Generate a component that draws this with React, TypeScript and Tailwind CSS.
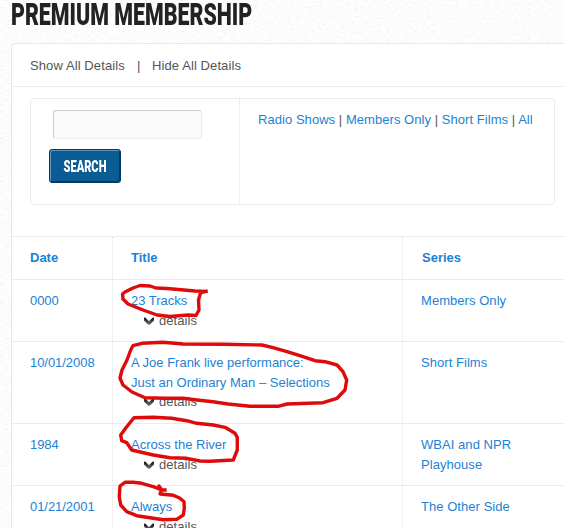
type Row = {
  date: string;
  title: string[];
  series: string[];
  height: string;
};

const rows: Row[] = [
  { date: "0000", title: ["23 Tracks"], series: ["Members Only"], height: "h-[62px]" },
  {
    date: "10/01/2008",
    title: ["A Joe Frank live performance:", "Just an Ordinary Man – Selections"],
    series: ["Short Films"],
    height: "h-[82px]",
  },
  { date: "1984", title: ["Across the River"], series: ["WBAI and NPR", "Playhouse"], height: "h-[62px]" },
  { date: "01/21/2001", title: ["Always"], series: ["The Other Side"], height: "h-[62px]" },
];

const filters = ["Radio Shows", "Members Only", "Short Films", "All"];

/**
 * Light speckled paper behind the page.
 */
function PaperTexture() {
  return (
    <svg className="absolute inset-0 h-full w-full" aria-hidden="true">
      <filter id="paper" x="0" y="0" width="100%" height="100%">
        <feTurbulence type="fractalNoise" baseFrequency="0.22 0.55" numOctaves="3" seed="8" />
        <feColorMatrix values="0 0 0 0 0.6  0 0 0 0 0.6  0 0 0 0 0.6  1.8 0 0 0 -1" />
      </filter>
      <rect width="100%" height="100%" filter="url(#paper)" opacity="0.42" />
    </svg>
  );
}

function Chevron() {
  return (
    <svg width="12" height="9" viewBox="0 0 12 9" className="mt-[6px] shrink-0" aria-hidden="true">
      <defs>
        <linearGradient id="chevron" x1="0" y1="0" x2="0" y2="1">
          <stop offset="0" stopColor="#111" />
          <stop offset="1" stopColor="#777" />
        </linearGradient>
      </defs>
      <path d="M1 0.5 L2.6 0.8 L6 4.2 L9.4 0.8 L11 0.5 L11 3.6 L6.8 7.8 L5.2 7.8 L1 3.6 Z" fill="url(#chevron)" />
    </svg>
  );
}

function TableRow({ row }: { row: Row }) {
  return (
    <div className={`flex border-b border-[#ebebeb] ${row.height}`}>
      <div className="w-[101px] border-r border-dotted border-[#e2e2e2] pt-[11px] pl-[18px] tracking-[-0.05px]">
        {row.date}
      </div>
      <div className="w-[290px] border-r border-dotted border-[#e2e2e2] pt-[11px] pl-[18px]">
        {row.title.map((line) => (
          <p key={line}>{line}</p>
        ))}
        <div className={`flex pl-3 text-[#555] ${row.title.length > 1 ? "-mt-px" : ""}`}>
          <Chevron />
          <span className="ml-1 tracking-[0.05px]">details</span>
        </div>
      </div>
      <div className="flex-1 pt-[11px] pl-[18px] tracking-[0.05px]">
        {row.series.map((line) => (
          <p key={line}>{line}</p>
        ))}
      </div>
    </div>
  );
}

/**
 * Hand-drawn red marks around the titles.
 */
function Annotations() {
  return (
    <svg
      className="pointer-events-none absolute top-0 left-0"
      width="564"
      height="528"
      fill="none"
      stroke="#df0b0b"
      strokeWidth="3.4"
      strokeLinejoin="round"
      strokeLinecap="square"
      aria-hidden="true"
    >
      <path d="M206 291.3L195 291L167 288.5L156 288L150 286L140 285.5L133 288L125 292L122.5 294L123 299L128 304L143 310L157 315L170 316.5L188 315L196 315.5L199 310L198.5 300L200.5 293L206 291.3" />
      <path d="M145 397.7L165 398.3L183 398.3L197 400L213 401.7L228 404L250 406.3L278 406.3L287 404L323 402.7L337 398.3L345 390L346.7 380L343 371.7L337 365L325 361.7L315 360.7L303 356.7L287 351.7L273 347.7L262 345L223 344.3L183 344L163 342.3L142 343.3L133 345.7L130.7 350L127 360L122 370L120 378L123 385L132 392Z" />
      <path d="M131.7 450L126.7 442.7L121.7 440.7L120.7 435L126.7 426.7L134 417.7L153.3 417.3L171.7 418.3L186.7 420.7L196.7 423.3L213.3 425L225 427.3L235 433.3L237.3 437.3L237.3 450L233.3 460L210 461.3L200 461L186.7 458.3L170 457.7L153.3 455Z" />
      <path d="M165 490L161.5 490L159 486L160.5 489.5L153.3 486.7L141.7 483.3L133.3 482.3L125 482.3L120 486L119.3 496.7L120.7 505L126.7 511.7L136.7 515.7L153.3 518.3L163.3 519.7L176.7 519.3L183.3 515L184.3 508.3L184 501.7L180 498.3L173.3 495.3L160 494L161.5 490" />
    </svg>
  );
}

export default function App() {
  return (
    <main className="relative h-[528px] w-[564px] overflow-hidden bg-[#fdfdfd] font-['Liberation_Sans',Arial,sans-serif] text-[13px] leading-5 text-[#1c82d4]">
      <PaperTexture />
      <div className="relative flex h-full flex-col pl-[11px]">
        <h1 className="h-[43px] w-max shrink-0 origin-left scale-x-[0.668] font-['Roboto',sans-serif] text-[32px] leading-[28px] font-black whitespace-nowrap text-[#222]">
          PREMIUM MEMBERSHIP
        </h1>
        <section className="h-[520px] shrink-0 rounded-tl-[4px] border-t border-l border-[#e8e8e8] bg-white">
          <div className="flex h-[43px] items-center border-b border-[#ebebeb] pt-0.5 pl-[18px] tracking-[0.1px] text-[#555]">
            <span className="w-[107px]">Show All Details</span>
            <span className="w-[15px]">|</span>
            <span>Hide All Details</span>
          </div>
          <div className="mt-[11px] ml-[18px] flex h-[107px] w-[525px] rounded-[4px] border border-[#ebebeb]">
            <form className="w-[209px] border-r border-dotted border-[#e2e2e2] pt-[11px] pl-[18px]">
              <input
                type="text"
                aria-label="Search"
                className="ml-1 block h-[29px] w-[149px] rounded-[3px] border border-[#ececec] border-t-[#ccc] border-l-[#ccc] bg-[#fafafa]"
              />
              <button
                type="button"
                className="mt-[10px] flex h-[34px] w-[72px] items-center justify-center rounded-[3px] border border-[#06395e] bg-[#0b5b94] font-['Roboto',sans-serif] text-[17px] font-black text-white shadow-[inset_1px_1px_0_#5f98bf,inset_-1px_-1px_0_#06395e]"
              >
                <span className="scale-x-[0.65]">SEARCH</span>
              </button>
            </form>
            <nav className="pt-[11px] pl-[18px] tracking-[0.05px] whitespace-nowrap">
              {filters.map((name, index) => (
                <span key={name}>
                  {index > 0 && <span className="text-[#555]"> | </span>}
                  <a href="#">{name}</a>
                </span>
              ))}
            </nav>
          </div>
          <div className="mt-[31px] flex h-11 border-y border-[#ebebeb] font-bold">
            <div className="w-[101px] border-r border-dotted border-[#e2e2e2] pt-[11px] pl-[18px]">Date</div>
            <div className="w-[290px] border-r border-dotted border-[#e2e2e2] pt-[11px] pl-[18px]">Title</div>
            <div className="pt-[11px] pl-[19px]">Series</div>
          </div>
          {rows.map((row) => (
            <TableRow key={row.date} row={row} />
          ))}
        </section>
      </div>
      <Annotations />
    </main>
  );
}
